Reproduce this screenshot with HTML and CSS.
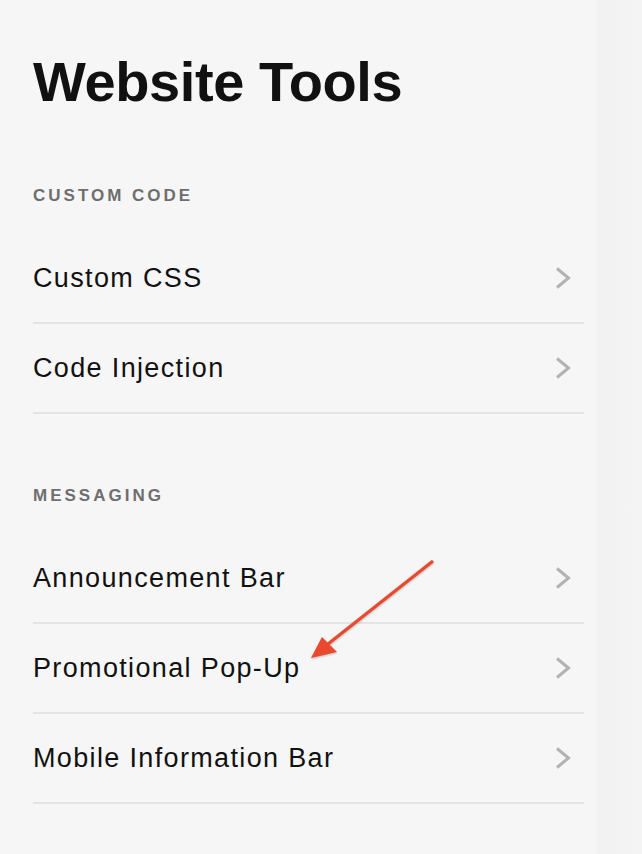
FILE: index.html
```html
<!DOCTYPE html>
<html lang="en">
<head>
<meta charset="utf-8">
<title>Website Tools</title>
<link rel="stylesheet" href="styles.css">
</head>
<body>
<div class="page">
  <main class="panel">
    <h1 class="title">Website Tools</h1>

    <section class="group">
      <h2 class="group-label">CUSTOM CODE</h2>
      <a class="row" href="#"><span class="row-text">Custom CSS</span><svg class="chev" viewBox="0 0 16 22" width="16" height="22"><polyline points="2,1.5 13.5,11 2,20.5"/></svg></a>
      <a class="row" href="#"><span class="row-text">Code Injection</span><svg class="chev" viewBox="0 0 16 22" width="16" height="22"><polyline points="2,1.5 13.5,11 2,20.5"/></svg></a>
    </section>

    <section class="group group-second">
      <h2 class="group-label">MESSAGING</h2>
      <a class="row" href="#"><span class="row-text">Announcement Bar</span><svg class="chev" viewBox="0 0 16 22" width="16" height="22"><polyline points="2,1.5 13.5,11 2,20.5"/></svg></a>
      <a class="row" href="#"><span class="row-text">Promotional Pop-Up</span><svg class="chev" viewBox="0 0 16 22" width="16" height="22"><polyline points="2,1.5 13.5,11 2,20.5"/></svg></a>
      <a class="row" href="#"><span class="row-text">Mobile Information Bar</span><svg class="chev" viewBox="0 0 16 22" width="16" height="22"><polyline points="2,1.5 13.5,11 2,20.5"/></svg></a>
    </section>

    <svg class="pointer" viewBox="0 0 145 115" width="145" height="115">
      <line x1="133" y1="11" x2="28" y2="94"/>
      <polygon points="11,108 22,87 37,102"/>
    </svg>
  </main>
  <div class="edge"></div>
</div>
</body>
</html>
```

FILE: styles.css
```css
* { box-sizing: border-box; }

html, body {
  margin: 0;
  padding: 0;
  background: #f6f6f6;
}

body {
  font-family: "Liberation Sans", Arial, sans-serif;
  color: #111111;
}

.page {
  display: grid;
  grid-template-columns: 597px 1fr;
  min-height: 854px;
}

.panel {
  position: relative;
  padding: 54px 13px 0 33px;
}

.edge {
  background: linear-gradient(to right, #f1f1f1, #f4f4f4);
}

.title {
  margin: 0;
  font-size: 56px;
  line-height: 56px;
  font-weight: 700;
  letter-spacing: -0.4px;
  color: #111111;
}

.group {
  margin-top: 76px;
  display: flex;
  flex-direction: column;
}

.group-second {
  margin-top: 72px;
}

.group-label {
  margin: 0 0 28px;
  font-size: 17px;
  line-height: 20px;
  font-weight: 700;
  letter-spacing: 3px;
  color: #6e6e6e;
}

.row {
  display: flex;
  align-items: center;
  justify-content: space-between;
  height: 90px;
  padding-right: 13px;
  border-bottom: 2px solid #e4e4e4;
  text-decoration: none;
  color: #111111;
}

.row-text {
  font-size: 27px;
  line-height: 30px;
  letter-spacing: 1.35px;
}

.chev {
  display: block;
}

.chev polyline {
  fill: none;
  stroke: #b2b2b2;
  stroke-width: 3;
}

.pointer {
  position: absolute;
  left: 300px;
  top: 550px;
  overflow: visible;
  filter: drop-shadow(0 1px 1px rgba(0, 0, 0, 0.25));
}

.pointer line {
  stroke: #e84a2f;
  stroke-width: 3.2;
}

.pointer polygon {
  fill: #e84a2f;
}
```
